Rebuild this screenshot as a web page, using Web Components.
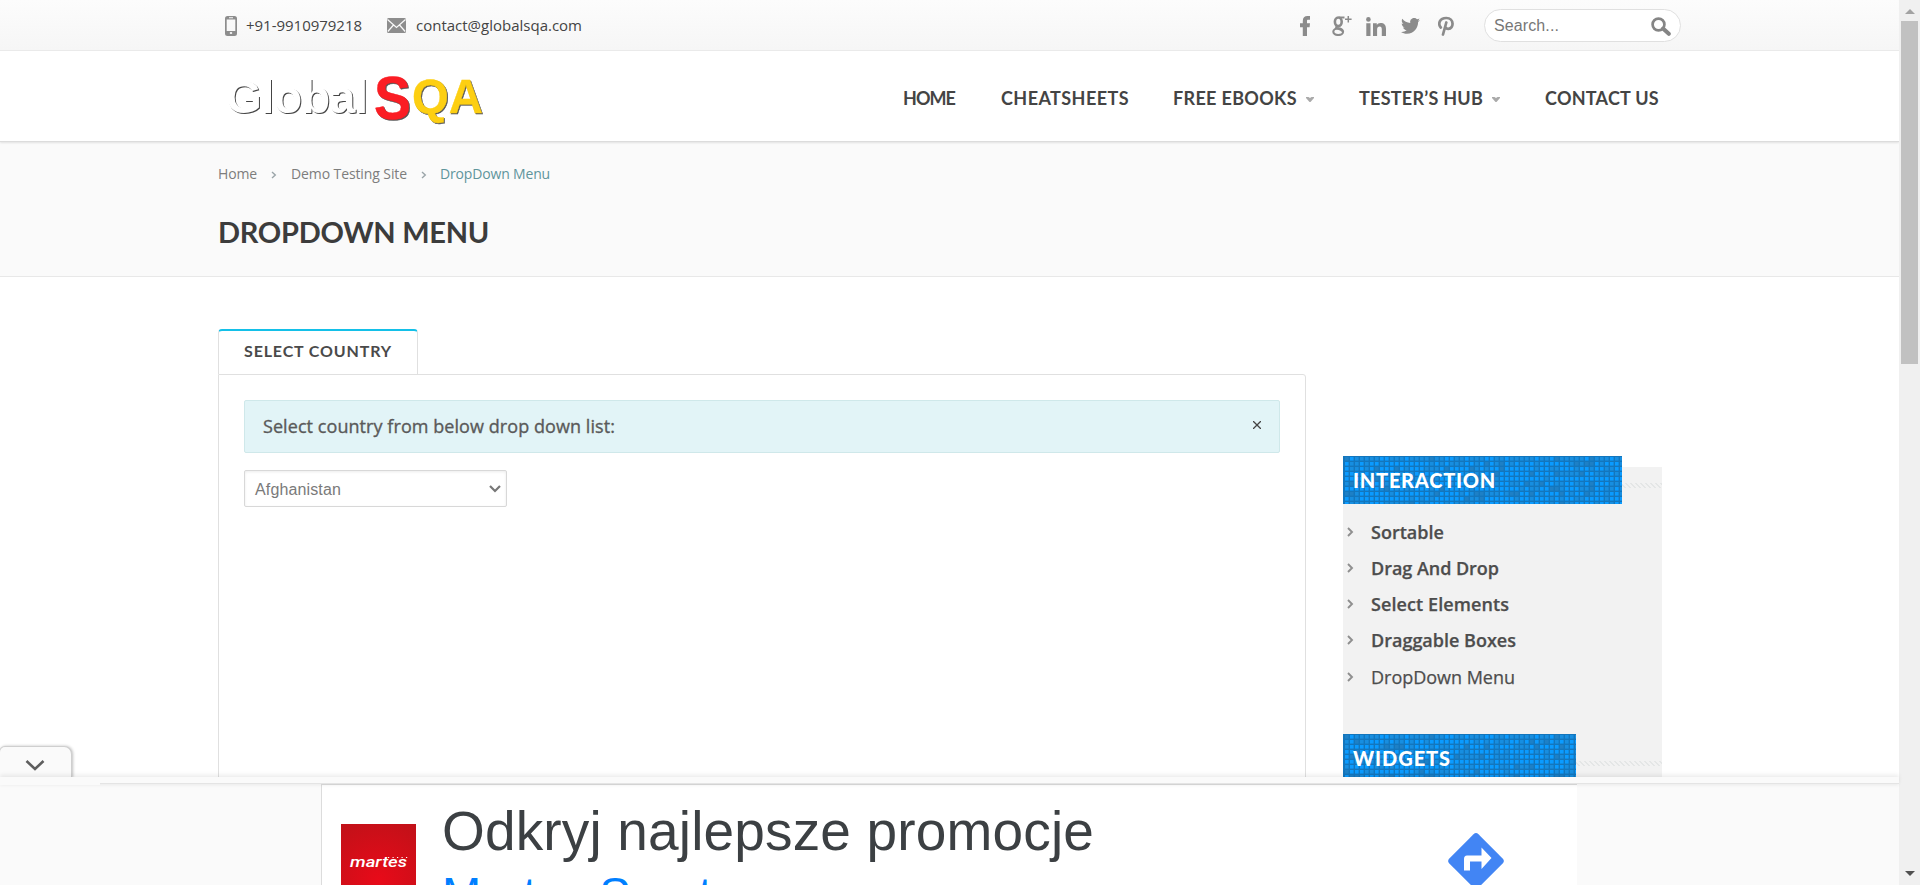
<!DOCTYPE html>
<html lang="en">
<head>
<meta charset="utf-8">
<title>DropDown Menu - GlobalSQA</title>
<style>
html,body{margin:0;height:100%;overflow:hidden;background:#fff}
body{font-family:"Open Sans",sans-serif}
</style>
</head>
<body>
<sqa-page></sqa-page>
<script>
const define=(name,html,ready)=>customElements.define(name,class extends HTMLElement{
  connectedCallback(){
    if(this.shadowRoot)return;
    this.attachShadow({mode:'open'}).innerHTML=typeof html==='function'?html(this):html;
    if(ready)ready(this);
  }
});

/* A single line of text, tracked so that it fills the width given in "w". */
define('ui-label','<style>:host{display:block;white-space:nowrap;flex:none}span{display:inline-block}</style><span><slot></slot></span>',el=>{
  const w=+el.getAttribute('w');
  if(!w)return;
  const span=el.shadowRoot.querySelector('span');
  const n=el.textContent.length;
  const natural=span.getBoundingClientRect().width;
  span.style.letterSpacing=((w-natural)/n).toFixed(3)+'px';
  el.style.width=w+'px';
});

const icons={
  phone:[12,20,'<path fill="#8d8d8d" fill-rule="evenodd" d="M2.5 0h7A2.5 2.5 0 0 1 12 2.5v15A2.5 2.5 0 0 1 9.5 20h-7A2.5 2.5 0 0 1 0 17.500v-15A2.500 2.500 0 0 1 2.500 0zM1.700 3.500v11.500h8.600V3.500zM4 1.300v1h4v-1zM4.700 17a1.300 1.100 0 1 0 2.600 0 1.300 1.100 0 1 0-2.600 0z"/>'],
  mail:[19,15,'<rect width="19" height="15" rx="1.500" fill="#8d8d8d"/><path d="M.5 1.500 9.500 9.500 18.500 1.500M.8 13.500 6.500 7M18.200 13.500 12.500 7" fill="none" stroke="#f9f9f9" stroke-width="1.200"/>'],
  facebook:[10,20,'<path fill="#8b8b8b" d="M2.800 20V11.200H0V7.300h2.800V5C2.800 1.700 4.500 0 7.500 0H10v3.700H8.300C7.200 3.700 7 4 7 5v2.300h3l-.4 3.900H7V20z"/>'],
  google:[20,20,'<g fill="none" stroke="#8b8b8b"><ellipse cx="6.300" cy="5.800" rx="3.400" ry="4.300" stroke-width="2.600"/><ellipse cx="6.200" cy="15.700" rx="4.900" ry="3.300" stroke-width="2.100"/><path d="M7 1.500h5.500M5.500 9.700c-2 1.400-1.500 2.300 0 2.800s4.500 1 5 3" stroke-width="2.200"/><path d="M16.300 0v6.500M13 3.300h6.600" stroke-width="1.500"/></g>'],
  linkedin:[20,19,'<g fill="#8b8b8b"><circle cx="2.400" cy="2.400" r="2.300"/><path d="M.3 6.300h4.200V19H.3zM7 6.300h3.800V8c.7-1.200 2-2 3.700-2C18.100 6 20 8 20 11.800V19h-4.200v-6.500c0-2-.6-3-2.100-3-1.700 0-2.600 1.200-2.600 3.100V19H7z"/></g>'],
  twitter:[19,16,'<path fill="#8b8b8b" d="M19 1.900c-.7.300-1.400.5-2.200.6.800-.5 1.400-1.200 1.700-2.100-.8.400-1.600.8-2.500.9A3.900 3.900 0 0 0 9.300 4.900C6.100 4.700 3.200 3.200 1.300.8c-1 1.800-.5 4.100 1.200 5.200-.6 0-1.200-.2-1.800-.5 0 1.900 1.300 3.500 3.100 3.900-.6.200-1.200.2-1.800.1.500 1.500 2 2.600 3.700 2.700A7.900 7.900 0 0 1 0 13.900C1.700 15 3.800 15.700 6 15.700c7.300 0 11.300-6.200 11.100-11.800.7-.6 1.400-1.200 1.900-2z"/>'],
  pinterest:[16,20,'<path fill="none" stroke="#8b8b8b" stroke-width="2.700" stroke-linecap="round" d="M2.800 11.500C-.3 8 1.500 2 8.300 2c8.200 0 7.700 10.800 2 10.800-2 0-2.800-1-3-2M8.300 6.500 5 18.500"/>'],
  search:[20,19,'<circle cx="7.500" cy="7.500" r="5.900" fill="none" stroke="#858585" stroke-width="2.700"/><path d="m12 11.500 5.800 5.300" stroke="#858585" stroke-width="4" stroke-linecap="round"/>'],
  crumb:[6,8,'<path d="m1 1 3.300 3L1 7" fill="none" stroke="#9aa4a8" stroke-width="1.400"/>'],
  item:[7,10,'<path d="m1 1 4 4-4 4" fill="none" stroke="#8f8f8f" stroke-width="1.900"/>'],
  caret:[8,5,'<path d="M0 0h2.500L4 1l1.500-1H8v1L4.500 5h-1L0 1z" fill="#aaa"/>'],
  close:[8,8,'<path d="m0 0 8 8M8 0 0 8" stroke="#444" stroke-width="1.300"/>'],
  select:[12,8,'<path d="m1 1 5 5 5-5" fill="none" stroke="#777" stroke-width="2.200"/>'],
  collapse:[20,13,'<path d="m1.500 2 8.500 8 8.500-8" fill="none" stroke="#5e5e5e" stroke-width="2.600"/>'],
  route:[58,58,'<rect x="8.400" y="8.400" width="41.200" height="41.200" rx="3.500" transform="rotate(45 29 29)" fill="#4285f4"/><path d="M17 38.500V27q0-3.500 3-3.500h14.500v-8L44.500 26 34.500 37V29.500h-11.500v9z" fill="#fff"/>'],
  up:[10,5,'<path d="M0 5 5 0l5 5z" fill="#a3a3a3"/>'],
  down:[10,5,'<path d="M0 0h10L5 5z" fill="#505050"/>']
};
define('ui-icon',el=>{
  const [w,h,body]=icons[el.getAttribute('name')];
  return `<style>:host{display:block;flex:none;width:${w}px;height:${h}px}svg{display:block}</style><svg width="${w}" height="${h}" viewBox="0 0 ${w} ${h}">${body}</svg>`;
});

define('top-bar',`<style>
:host{display:flex;box-sizing:border-box;height:51px;background:linear-gradient(#fcfcfc,#f6f6f6);border-bottom:1px solid #ebebeb;padding-left:225px;color:#444;font-size:15px;line-height:51px;align-items:flex-start}
ui-icon{margin-top:16px}
.search{box-sizing:border-box;display:flex;width:197px;height:33px;margin:9px 0 0 30px;border:1px solid #e0e0e0;border-radius:17px;background:#fff;padding-left:9px;font:16px/31px "Liberation Sans",sans-serif;color:#777}
</style>
<ui-icon name="phone"></ui-icon><ui-label w="116" style="margin-left:9px">+91-9910979218</ui-label>
<ui-icon name="mail" style="margin:18px 0 0 25px"></ui-icon><ui-label w="166" style="margin-left:10px">contact@globalsqa.com</ui-label>
<ui-icon name="facebook" style="margin-left:718px"></ui-icon>
<ui-icon name="google" style="margin-left:22px"></ui-icon>
<ui-icon name="linkedin" style="margin:17px 0 0 14px"></ui-icon>
<ui-icon name="twitter" style="margin:18px 0 0 15px"></ui-icon>
<ui-icon name="pinterest" style="margin-left:18px"></ui-icon>
<div class="search"><ui-label w="65">Search...</ui-label><ui-icon name="search" style="margin:7px 0 0 92px"></ui-icon></div>`);

define('site-logo',`<style>:host{display:block;width:265px;height:76px}svg{display:block;overflow:visible;font-family:"Liberation Sans",sans-serif}
.g{fill:#fff;filter:drop-shadow(1px 1px .7px #444)}
.s{fill:#fb1d24;stroke:#fb1d24;stroke-width:.5;filter:drop-shadow(1px 1px .7px #555)}
.q{fill:#fdcf12;stroke:#fdcf12;stroke-width:.4;filter:drop-shadow(1px 1px .7px #555)}</style>
<svg width="265" height="76"><text class="g" x="1" y="54" font-size="46" textLength="142">Global</text>
<text class="s" x="149" y="60" font-size="61" textLength="37" lengthAdjust="spacingAndGlyphs">S</text>
<text class="q" x="187" y="54" font-size="48" textLength="71" lengthAdjust="spacingAndGlyphs">QA</text></svg>`);

define('site-header',`<style>
:host{display:flex;box-sizing:border-box;height:91px;background:#fff;border-bottom:1px solid #dcdcdc;box-shadow:0 1px 2px rgba(0,0,0,.1);position:relative;padding-left:225px;font:bold 18px/94px Lato,sans-serif;color:#444}
site-logo{margin-top:8px;flex:none}
ui-icon{margin-top:46px}
</style>
<site-logo></site-logo>
<ui-label w="52" style="margin-left:413px">HOME</ui-label>
<ui-label w="128" style="margin-left:46px">CHEATSHEETS</ui-label>
<ui-label w="124" style="margin-left:44px">FREE EBOOKS</ui-label><ui-icon name="caret" style="margin-left:9px"></ui-icon>
<ui-label w="124" style="margin-left:45px">TESTER’S HUB</ui-label><ui-icon name="caret" style="margin-left:9px"></ui-icon>
<ui-label w="114" style="margin-left:45px">CONTACT US</ui-label>`);

define('page-title',`<style>
:host{display:block;box-sizing:border-box;height:135px;background:#fafafa;border-bottom:1px solid #e8e8e8;padding:17px 0 0 218px;color:#7d7d7d;font-size:14px;line-height:30px}
nav{display:flex;align-items:center;height:30px}
h1{margin:24px 0 0;font:bold 29px/38px Lato,sans-serif;color:#3c3c3c}
</style>
<nav><ui-label w="39">Home</ui-label><ui-icon name="crumb" style="margin:2px 0 0 14px"></ui-icon><ui-label w="116" style="margin-left:14px">Demo Testing Site</ui-label><ui-icon name="crumb" style="margin:2px 0 0 14px"></ui-icon><ui-label w="110" style="margin-left:13px;color:#5f959c">DropDown Menu</ui-label></nav>
<h1><ui-label w="271">DROPDOWN MENU</ui-label></h1>`);

define('tab-panel',`<style>
:host{display:flex;flex-direction:column;width:1088px;height:500px;flex:none}
.tab{box-sizing:border-box;width:200px;height:45px;border:1px solid #e0e0e0;border-top:2px solid #14c0e8;border-bottom:0;border-radius:4px 4px 0 0;padding-left:25px;font:bold 16px/40px Lato,sans-serif;color:#4a4a4a;background:#fff}
.body{flex:1;border:1px solid #e0e0e0;border-radius:0 3px 0 0;padding:25px}
.alert{box-sizing:border-box;display:flex;justify-content:space-between;height:53px;background:#e2f4f7;border:1px solid #cfe8ea;border-radius:2px;padding:0 18px;-webkit-text-stroke:.35px #5a5a5a;font-size:18px;line-height:51px;color:#5a5a5a}
.select{box-sizing:border-box;display:flex;width:263px;height:37px;margin-top:17px;border:1px solid #d8d8d8;border-radius:2px;box-shadow:inset 0 1px 3px rgba(0,0,0,.08);padding:0 5px 0 10px;justify-content:space-between;font:16px/37px "Liberation Sans",sans-serif;color:#7a7a7a}
</style>
<div class="tab"><ui-label w="148">SELECT COUNTRY</ui-label></div>
<div class="body"><div class="alert"><ui-label w="352">Select country from below drop down list:</ui-label><ui-icon name="close" style="margin-top:20px"></ui-icon></div>
<div class="select"><ui-label w="86">Afghanistan</ui-label><ui-icon name="select" style="margin-top:14px"></ui-icon></div></div>`);

/* Section heading over a mosaic of blue squares on a 5px grid. */
define('side-heading',el=>{
  const w=+el.getAttribute('width');
  let seed=7,cells='';
  for(let y=1;y<48;y+=5)for(let x=2;x<w;x+=5){
    seed=(seed*16807)%2147483647;
    const r=seed/2147483647,edge=y<3?.75:.4;
    cells+=`<rect x="${x}" y="${y}" width="3.600" height="3.600" fill="${r>edge?'#0b9bff':r>.08?'#178ee0':'#1e80c6'}"/>`;
  }
  return `<style>:host{display:flex;align-items:center;height:48px}
.box{display:grid;width:${w}px;height:48px;background:#1376bd;flex:none}
svg,.t{grid-area:1/1}.t{padding-left:10px;font:900 20px/48px Lato,sans-serif;color:#fff;z-index:1}
.stripe{flex:1;height:5px;margin-top:27px;align-self:flex-start;background:repeating-linear-gradient(45deg,#f2f2f2 0 1.800px,#e4e6e6 1.800px 3.535px)}</style>
<div class="box"><svg width="${w}" height="48">${cells}</svg><div class="t"><slot></slot></div></div><div class="stripe"></div>`;
});

define('side-item','<style>:host{display:flex;align-items:center;height:36px;padding-left:4px;gap:17px;font-size:18px;line-height:36px;color:#4d4d4d}</style><ui-icon name="item"></ui-icon><slot></slot>');

define('side-menu',`<style>
:host{display:block;width:319px;height:400px;margin:129px 0 0 37px;background:linear-gradient(#fff 11px,#f2f2f2 11px)}
.list{padding-top:10px;height:220px;font-weight:600;-webkit-text-stroke:.25px #4d4d4d}
</style>
<side-heading width="279"><ui-label w="143">INTERACTION</ui-label></side-heading>
<div class="list">
<side-item><ui-label w="73">Sortable</ui-label></side-item>
<side-item><ui-label w="128">Drag And Drop</ui-label></side-item>
<side-item><ui-label w="138">Select Elements</ui-label></side-item>
<side-item><ui-label w="145">Draggable Boxes</ui-label></side-item>
<side-item style="font-weight:400;margin-top:1px"><ui-label w="144">DropDown Menu</ui-label></side-item>
</div>
<side-heading width="233"><ui-label w="98">WIDGETS</ui-label></side-heading>`);

define('ad-logo',`<style>:host{display:block;width:75px;height:75px;background:radial-gradient(circle at 50% 75%,#e80a19,#c01118)}svg{display:block}</style>
<svg width="75" height="75"><text x="9" y="43" font-family="Roboto,sans-serif" font-size="15" font-weight="500" font-style="italic" fill="#fff" textLength="57" lengthAdjust="spacingAndGlyphs">martes</text><path d="M47 33.500h20" stroke="#fff" stroke-dasharray="1.200 3.300" stroke-width="1.200"/></svg>`);

/* Anchored advert that lies over the foot of the page. */
define('anchor-ad',`<style>
:host{display:block;position:absolute;left:0;top:746px;width:1899px;height:139px}
.tab{box-sizing:border-box;width:73px;height:32px;margin-left:-1px;background:#fafafa;border:1px solid #cfcfcf;border-bottom:0;border-radius:6px 8px 0 0;box-shadow:1px 0 3px rgba(0,0,0,.25);display:flex;padding:12px 0 0 25px}
.band{height:6px;background:#fafafa;margin-top:-1px;border-bottom:1px solid #e4e4e4;box-shadow:0 -2px 4px rgba(0,0,0,.08),0 2px 3px rgba(0,0,0,.04);position:relative}
.band i{display:block;width:100px;height:8px;background:#fafafa}
.body{height:101px;background:#fafafa;padding-left:321px}
.ad{box-sizing:border-box;display:flex;width:1256px;height:101px;background:#fff;border-left:1px solid #dcdcdc;border-top:1px solid #dcdcdc;padding-left:19px;overflow:hidden}
.copy{margin-left:26px;width:1005px;font:55px/63px "Liberation Sans",sans-serif;color:#3c4043}
.copy .b{font-size:47px;line-height:54px;color:#007fff;margin-top:4px}
</style>
<div class="tab"><ui-icon name="collapse"></ui-icon></div>
<div class="band"><i></i></div>
<div class="body"><div class="ad"><ad-logo style="margin-top:39px;flex:none"></ad-logo>
<div class="copy"><ui-label w="652" style="margin-top:15px">Odkryj najlepsze promocje</ui-label><ui-label class="b" w="270">Martes Sport</ui-label></div>
<ui-icon name="route" style="margin-top:47px"></ui-icon></div></div>`);

define('scroll-bar',`<style>:host{box-sizing:border-box;display:flex;flex-direction:column;align-items:center;width:21px;height:885px;background:#f0f0f0;padding:9px 0}
.thumb{width:17px;height:343px;background:#c1c1c1;margin:7px 0 auto}</style>
<ui-icon name="up"></ui-icon><div class="thumb"></div><ui-icon name="down"></ui-icon>`);

define('sqa-page',`<style>
:host{display:flex;width:1920px;height:885px;overflow:hidden;position:relative;background:#fff}
main{width:1899px;height:885px;overflow:hidden;flex:none}
.content{display:flex;align-items:flex-start;padding-left:218px}
tab-panel{margin-top:52px}
side-menu{margin-top:179px}
</style>
<main><top-bar></top-bar><site-header></site-header><page-title></page-title>
<div class="content"><tab-panel></tab-panel><side-menu></side-menu></div></main>
<scroll-bar></scroll-bar><anchor-ad></anchor-ad>`);
</script>
</body>
</html>
